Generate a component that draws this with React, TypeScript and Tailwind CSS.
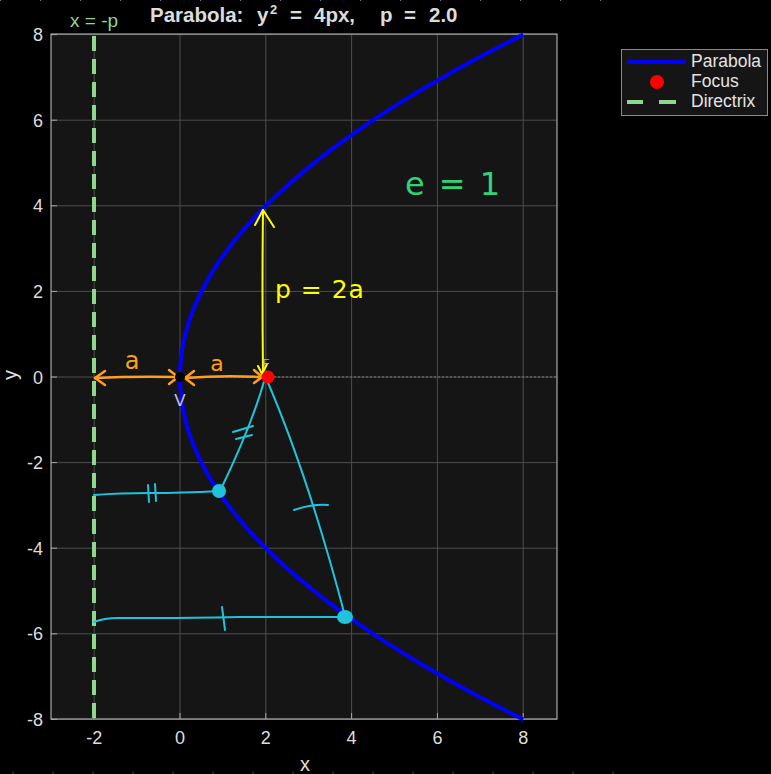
import React from "react";

// data -> pixel mapping for the plot box (x: -3..~8.8, y: -8..8)
const X = (x: number) => 180 + 42.9 * x;
const Y = (y: number) => 377 - 42.8 * y;

const PLOT = { left: 51, top: 34, right: 557, bottom: 719 };
const XTICKS = [-2, 0, 2, 4, 6, 8];
const YTICKS = [8, 6, 4, 2, 0, -2, -4, -6, -8];

function parabolaPath() {
  const pts: string[] = [];
  for (let y = -8; y <= 8.001; y += 0.2) {
    pts.push(`${pts.length ? "L" : "M"}${X((y * y) / 8).toFixed(1)} ${Y(y).toFixed(1)}`);
  }
  return pts.join(" ");
}

function Chart() {
  return (
    <svg width={621} height={774} className="shrink-0">
      {/* plot background */}
      <rect x={PLOT.left} y={PLOT.top} width={PLOT.right - PLOT.left} height={PLOT.bottom - PLOT.top} fill="#151515" />

      {/* grid */}
      {XTICKS.map((t) => (
        <line key={`gx${t}`} x1={X(t)} x2={X(t)} y1={PLOT.top} y2={PLOT.bottom} stroke="#4d4d4d" strokeWidth={1} />
      ))}
      {YTICKS.map((t) => (
        <line key={`gy${t}`} x1={PLOT.left} x2={PLOT.right} y1={Y(t)} y2={Y(t)} stroke="#4d4d4d" strokeWidth={1} />
      ))}

      {/* axis box + ticks */}
      <rect x={PLOT.left} y={PLOT.top} width={PLOT.right - PLOT.left} height={PLOT.bottom - PLOT.top} fill="none" stroke="#a8a8a8" strokeWidth={1.2} />
      {YTICKS.map((t) => (
        <line key={`ty${t}`} x1={PLOT.left} x2={PLOT.left + 6} y1={Y(t)} y2={Y(t)} stroke="#a8a8a8" />
      ))}
      {XTICKS.map((t) => (
        <line key={`tx${t}`} x1={X(t)} x2={X(t)} y1={PLOT.bottom} y2={PLOT.bottom - 6} stroke="#a8a8a8" />
      ))}

      {/* tick labels */}
      {YTICKS.map((t) => (
        <text key={`ly${t}`} x={43} y={Y(t) + 6.5} textAnchor="end" fontSize={18} fill="#dedede">
          {t}
        </text>
      ))}
      {XTICKS.map((t) => (
        <text key={`lx${t}`} x={X(t)} y={744} textAnchor="middle" fontSize={18} fill="#dedede">
          {t}
        </text>
      ))}
      <text x={305} y={771} textAnchor="middle" fontSize={20} fill="#dedede">x</text>
      <text x={17} y={375} textAnchor="middle" fontSize={20} fill="#dedede" transform="rotate(-90 17 375)">y</text>

      {/* title */}
      <text y={22} fontSize={20.5} fontWeight="bold" fill="#dcdcdc">
        <tspan x={150}>Parabola:</tspan>
        <tspan x={257}>y</tspan>
        <tspan x={270} dy={-8} fontSize={13}>2</tspan>
        <tspan x={290} dy={8}>=</tspan>
        <tspan x={314}>4px,</tspan>
        <tspan x={380}>p</tspan>
        <tspan x={404}>=</tspan>
        <tspan x={429}>2.0</tspan>
      </text>
      <text x={70} y={27} fontSize={19} fill="#8fd68f">x = -p</text>

      {/* axis of symmetry */}
      <line x1={182} x2={PLOT.right} y1={377} y2={377} stroke="#7c7c7c" strokeWidth={1} strokeDasharray="2 2" />

      {/* directrix */}
      <line x1={94} x2={94} y1={PLOT.top + 2} y2={PLOT.bottom} stroke="#8fd68f" strokeWidth={4} strokeDasharray="15 8" />

      {/* parabola */}
      <path d={parabolaPath()} fill="none" stroke="#0000ff" strokeWidth={4} />

      {/* hand-drawn: a + a */}
      <g stroke="#ff9f1a" strokeWidth={2.5} fill="none" strokeLinecap="round" strokeLinejoin="round">
        <path d="M95 378 Q135 376 178 377" />
        <path d="M105 371 L95 378 L105 385" />
        <path d="M169 370 L178 377 L169 384" />
        <path d="M185 378 Q222 375 262 377" />
        <path d="M194 371 L185 378 L194 385" />
        <path d="M254 370 L262 377 L254 383" />
      </g>
      <text x={132} y={369} textAnchor="middle" fontSize={24} fill="#ff9f1a" fontFamily="'DejaVu Sans', sans-serif">a</text>
      <text x={217} y={371} textAnchor="middle" fontSize={22} fill="#ff9f1a" fontFamily="'DejaVu Sans', sans-serif">a</text>

      {/* vertex */}
      <circle cx={180} cy={377} r={5} fill="#000" />
      <text x={180} y={406} textAnchor="middle" fontSize={17} fill="#c9c9e6">V</text>

      {/* hand-drawn: p = 2a */}
      <g stroke="#ffff00" strokeWidth={2} fill="none" strokeLinecap="round" strokeLinejoin="round">
        <path d="M263 372 Q262 290 263 210" />
        <path d="M255 225 L263 210 L274 227" />
        <path d="M258 366 L262 374 L267 364" />
      </g>
      <text x={275} y={298} fontSize={25} fill="#ffff00" fontFamily="'DejaVu Sans', sans-serif" letterSpacing={1}>p = 2a</text>

      {/* e = 1 */}
      <text x={405} y={195} fontSize={32} fill="#2fd27a" fontFamily="'DejaVu Sans', sans-serif" letterSpacing={2}>e = 1</text>

      {/* hand-drawn: equal distances */}
      <g stroke="#1fc3dc" strokeWidth={2} fill="none" strokeLinecap="round" strokeLinejoin="round">
        <path d="M265 378 Q252 425 220 491" />
        <path d="M233 432 L253 426" />
        <path d="M236 439 L252 435" />
        <path d="M266 378 Q308 475 345 616" />
        <path d="M294 510 Q312 504 328 505" />
        <path d="M94 495 Q120 493 150 493 T 220 491" />
        <path d="M148 485 L149 502" />
        <path d="M155 484 L156 501" />
        <path d="M94 622 Q104 618 118 618 T 160 618 T 240 617 L345 617" />
        <path d="M222 607 L225 630" />
      </g>
      <circle cx={219} cy={491} r={7} fill="#1fc3dc" />
      <ellipse cx={345} cy={617} rx={8} ry={7} fill="#1fc3dc" />

      {/* focus */}
      <text x={266} y={367} textAnchor="middle" fontSize={11} fill="#b0b0b0">F</text>
      <circle cx={268} cy={377} r={6.5} fill="#ff0000" />

      {/* screenshot edge marks */}
      <line x1={0} x2={621} y1={0.5} y2={0.5} stroke="#9fb3dd" strokeWidth={1} strokeDasharray="1 39" opacity={0.7} />
      <line x1={12} x2={621} y1={773} y2={773} stroke="#777" strokeWidth={1} strokeDasharray="2 38" opacity={0.7} />
    </svg>
  );
}

function Legend() {
  const rows = [
    {
      label: "Parabola",
      icon: <line x1={5} x2={64} y1={10} y2={10} stroke="#0000ff" strokeWidth={4} />,
    },
    {
      label: "Focus",
      icon: <circle cx={35} cy={10} r={7} fill="#ff0000" />,
    },
    {
      label: "Directrix",
      icon: (
        <g stroke="#8fd68f" strokeWidth={4}>
          <line x1={5} x2={21} y1={10} y2={10} />
          <line x1={37} x2={54} y1={10} y2={10} />
        </g>
      ),
    },
  ];
  return (
    <div className="pt-[49px]">
      <div className="flex flex-col w-[147px] h-[67px] border border-[#8a8a8a] bg-[#151515] pt-[2px]">
        {rows.map((r) => (
          <div key={r.label} className="flex items-center h-5">
            <svg width={69} height={20} className="shrink-0">
              {r.icon}
            </svg>
            <span className="text-[17.5px] leading-none text-[#e4e4e4]">{r.label}</span>
          </div>
        ))}
      </div>
    </div>
  );
}

export default function App() {
  return (
    <div className="flex w-[771px] h-[774px] bg-black overflow-hidden font-['Liberation_Sans',Arial,sans-serif]">
      <Chart />
      <Legend />
    </div>
  );
}
